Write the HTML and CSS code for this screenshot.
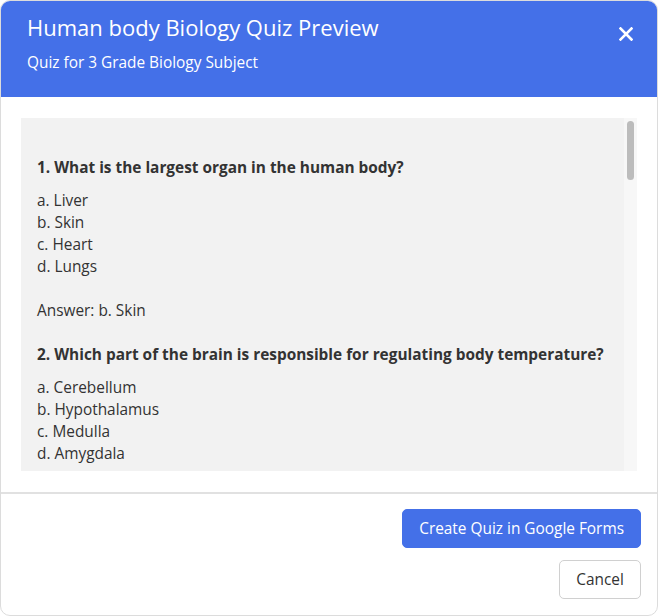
FILE: index.html
```html
<!DOCTYPE html>
<html>
<head>
<meta charset="utf-8">
<link rel="stylesheet" href="styles.css">
</head>
<body>
<div class="modal">
  <div class="header">
    <div class="titles">
      <div class="title">Human body Biology Quiz Preview</div>
      <div class="subtitle">Quiz for 3 Grade Biology Subject</div>
    </div>
    <svg class="close" width="14" height="14" viewBox="0 0 14 14"><path d="M1.5 1.5 L12.5 12.5 M12.5 1.5 L1.5 12.5" stroke="#fff" stroke-width="2.6" stroke-linecap="square"/></svg>
  </div>
  <div class="body">
    <div class="preview">
      <div class="content">
        <p class="q">1. What is the largest organ in the human body?</p>
        <p class="opts">a. Liver<br>b. Skin<br>c. Heart<br>d. Lungs</p>
        <p class="ans">Answer: b. Skin</p>
        <p class="q">2. Which part of the brain is responsible for regulating body temperature?</p>
        <p class="opts">a. Cerebellum<br>b. Hypothalamus<br>c. Medulla<br>d. Amygdala</p>
        <p class="ans">Answer: b. Hypothalamus</p>
      </div>
      <div class="scrollbar"><div class="thumb"></div></div>
    </div>
  </div>
  <div class="footer">
    <button class="btn primary">Create Quiz in Google Forms</button>
    <button class="btn secondary">Cancel</button>
  </div>
</div>
</body>
</html>
```
FILE: styles.css
```css
* { box-sizing: border-box; }
html, body { margin: 0; padding: 0; background: #fff; }
body { font-family: "Open Sans", "Liberation Sans", sans-serif; }
.modal {
  width: 658px;
  height: 616px;
  border: 1px solid #dcdcdc;
  border-radius: 10px;
  overflow: hidden;
  display: flex;
  flex-direction: column;
  background: #fff;
}
.header {
  background: #4470e8;
  height: 96px;
  padding: 10px 24px 0 26px;
  display: flex;
  justify-content: space-between;
  align-items: flex-start;
  color: #fff;
  flex-shrink: 0;
}
.title { font-size: 22px; line-height: 32px; }
.subtitle { font-size: 15.4px; line-height: 22px; margin-top: 9px; }
.close { margin-top: 16px; }
.body {
  padding: 21px 20px 21px 20px;
  border-bottom: 2px solid #e1e1e1;
  flex-shrink: 0;
}
.preview {
  position: relative;
  height: 353px;
  background: #f2f2f2;
  overflow: hidden;
}
.content {
  padding: 39px 16px 0 16px;
  color: #333;
  font-size: 15.4px;
  line-height: 22px;
}
.content p { margin: 0; }
.content .q { font-weight: 700; margin-bottom: 11px; }
.content .opts { margin-bottom: 22px; }
.content .ans { margin-bottom: 22px; }
.scrollbar {
  position: absolute;
  right: 0;
  top: 0;
  bottom: 0;
  width: 13px;
  background: #f7f7f7;
}
.thumb {
  position: absolute;
  left: 3px;
  top: 3px;
  width: 7px;
  height: 59px;
  border-radius: 4px;
  background: #bcbcbc;
}
.footer {
  display: flex;
  flex-direction: column;
  align-items: flex-end;
  padding: 15px 16px 0 0;
  gap: 12px;
}
.btn {
  font-family: "Open Sans", "Liberation Sans", sans-serif;
  font-size: 15.4px;
  height: 39px;
  border-radius: 5px;
  cursor: pointer;
}
.primary {
  background: #4470e8;
  color: #fff;
  border: 1px solid #4470e8;
  padding: 0 16px;
}
.secondary {
  background: #fff;
  color: #333;
  border: 1px solid #d0d0d0;
  width: 82px;
}
```
